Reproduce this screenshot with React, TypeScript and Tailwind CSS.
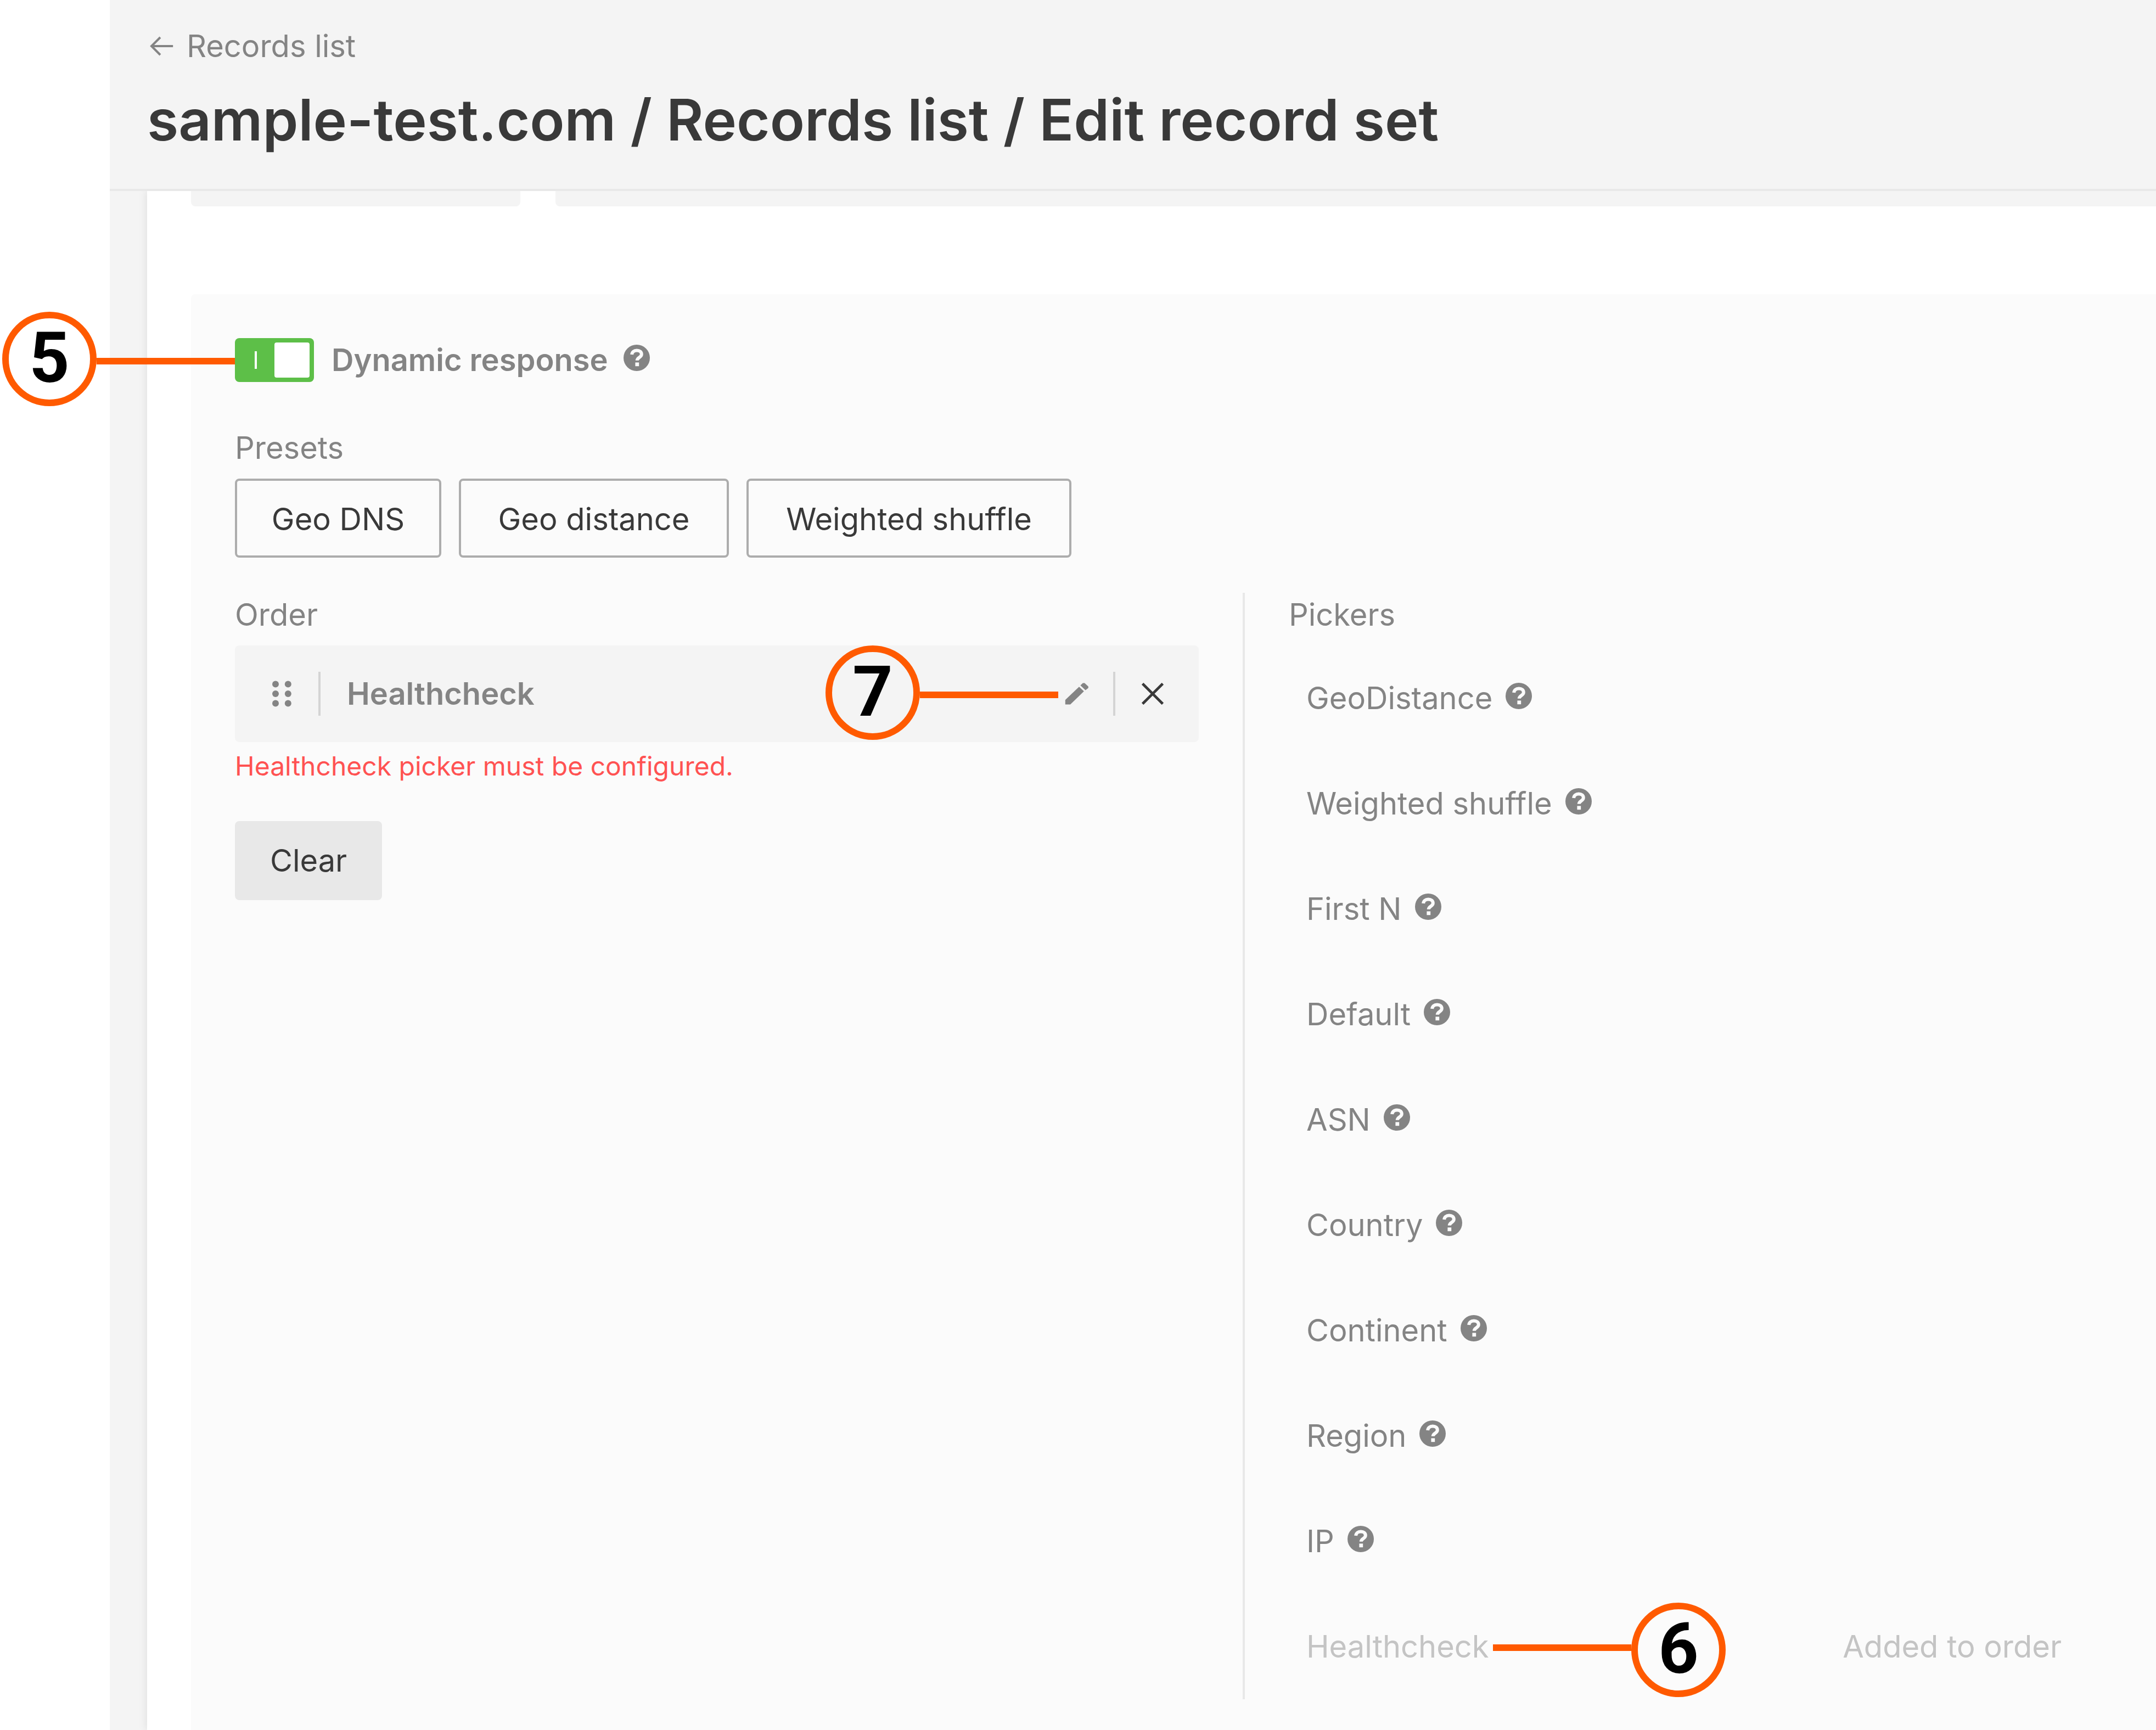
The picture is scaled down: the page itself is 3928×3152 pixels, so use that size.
import React from 'react';

const PRESETS = [
  { name: 'Geo DNS', width: 'w-[376px]' },
  { name: 'Geo distance', width: 'w-[492px]' },
  { name: 'Weighted shuffle', width: 'w-[592px]' },
];

const PICKERS = [
  'GeoDistance',
  'Weighted shuffle',
  'First N',
  'Default',
  'ASN',
  'Country',
  'Continent',
  'Region',
  'IP',
];

function HelpButton({ topic }: { topic: string }) {
  return (
    <button type="button" aria-label={'Help: ' + topic} className="mb-2 shrink-0">
      <svg viewBox="0 0 24 24" className="size-12" aria-hidden="true">
        <circle cx="12" cy="12" r="12" fill="#848484" />
        <path
          d="M7.6 9C7.8 6.6 9.5 5.3 12.1 5.3c2.6 0 4.3 1.3 4.3 3.5 0 2.9-4 2.8-4 5.6"
          fill="none"
          stroke="#fbfbfb"
          strokeWidth="3"
        />
        <rect x="10.7" y="16.2" width="3.4" height="3.4" fill="#fbfbfb" />
      </svg>
    </button>
  );
}

/* Numbered callout with a leader line; laid over the element it points at. */
function Callout({ n, className, flip = false }: { n: number; className: string; flip?: boolean }) {
  return (
    <div className={'absolute flex items-center ' + (flip ? 'flex-row-reverse ' : '') + className}>
      <div className="flex size-[172px] shrink-0 items-center justify-center rounded-full border-12 border-[#ff5a00] pb-1 font-[Roboto,sans-serif] text-[128px] leading-none font-bold text-black">
        {n}
      </div>
      <div className={'h-3 w-[252px] shrink-0 bg-[#ff5a00] ' + (flip ? 'mb-2' : 'mt-2')} />
    </div>
  );
}

export default function App() {
  return (
    <div className="min-h-screen overflow-hidden bg-white pl-[200px] font-[Inter,sans-serif] text-[56px] leading-[80px] text-[#848484]">
      <div className="flex min-h-screen flex-col bg-[#f4f4f4]">
        <header className="relative z-10 border-b-4 border-[#e8e8e8] bg-[#f4f4f4] px-[68px] pt-11 pb-[62px]">
          <a href="#records" className="flex w-fit items-center gap-6 pl-1">
            <svg viewBox="0 0 11 10" className="h-10 w-11" fill="none" stroke="#848484" aria-hidden="true">
              <path d="M1 5H10.8M5 1L1 5L5 9" />
            </svg>
            Records list
          </a>
          <h1 className="mt-[30px] text-[104px] leading-[128px] font-semibold text-[#393939]">
            sample-test.com / Records list / Edit record set
          </h1>
        </header>

        <main className="ml-[68px] flex grow flex-col bg-white pl-20 shadow-[0_0_16px_rgba(0,0,0,0.1)]">
          <div className="flex gap-16">
            <div className="h-7 w-[600px] rounded-b-lg bg-[#f4f4f4]" />
            <div className="h-7 grow rounded-bl-lg bg-[#f4f4f4]" />
          </div>

          <section className="mt-40 grow rounded-tl-lg bg-[#fbfbfb] pt-20 pl-20">
            <div className="relative flex items-center gap-7">
              <label className="flex items-center gap-8 font-semibold">
                <input type="checkbox" role="switch" defaultChecked className="sr-only" />
                <span className="flex h-20 w-36 items-center justify-between rounded-lg bg-[#5dbf48] py-2 pr-2 pl-9">
                  <span className="h-8 w-1 bg-white" />
                  <span className="size-16 rounded-sm bg-white" />
                </span>
                Dynamic response
              </label>
              <HelpButton topic="Dynamic response" />
              <Callout n={5} className="-top-12 -left-[424px]" />
            </div>

            <h2 className="mt-20">Presets</h2>
            <div className="mt-4 flex gap-8">
              {PRESETS.map((p) => (
                <button
                  key={p.name}
                  type="button"
                  className={'h-36 rounded-lg border-4 border-[#adadad] pt-1 text-[#393939] ' + p.width}
                >
                  {p.name}
                </button>
              ))}
            </div>

            <div className="mt-16 flex">
              <div className="w-[1756px] shrink-0">
                <h2>Order</h2>
                <div className="relative mt-4 flex h-44 items-center rounded-lg bg-[#f4f4f4] px-16">
                  <button type="button" aria-label="Reorder" className="px-1">
                    <svg viewBox="0 0 9 12" className="h-12 w-9" fill="#848484" aria-hidden="true">
                      <circle cx="1.5" cy="1.6" r="1.5" />
                      <circle cx="7.2" cy="1.6" r="1.5" />
                      <circle cx="1.5" cy="6" r="1.5" />
                      <circle cx="7.2" cy="6" r="1.5" />
                      <circle cx="1.5" cy="10.4" r="1.5" />
                      <circle cx="7.2" cy="10.4" r="1.5" />
                    </svg>
                  </button>
                  <span className="ml-11 h-20 w-1 bg-[#d4d4d4]" />
                  <span className="ml-12 grow font-semibold">Healthcheck</span>
                  <button type="button" aria-label="Edit Healthcheck">
                    <svg viewBox="0 0 11 10" className="h-10 w-11" fill="#848484" aria-hidden="true">
                      <path d="M0.2 9.9V7.8L6.5 1.8L8.7 3.9L2.5 9.9Z" />
                      <path d="M7.1 1.2L8.2 0.1H9L10.7 1.7V2.4L9.4 3.4Z" />
                    </svg>
                  </button>
                  <span className="ml-11 h-20 w-1 bg-[#d4d4d4]" />
                  <button type="button" aria-label="Remove Healthcheck" className="ml-12">
                    <svg viewBox="0 0 10 10" className="size-10" stroke="#393939" strokeWidth="1.2" fill="none" aria-hidden="true">
                      <path d="M0.4 0.4L9.6 9.6M9.6 0.4L0.4 9.6" />
                    </svg>
                  </button>
                  <Callout n={7} className="top-0 left-[1076px]" />
                </div>
                <p className="mt-1 text-[48px] text-[#ff5252]">Healthcheck picker must be configured.</p>
                <button type="button" className="mt-15 h-36 rounded-lg bg-[#e8e8e8] px-16 text-[#393939]">
                  Clear
                </button>
              </div>

              <div className="ml-20 grow border-l-4 border-[#e8e8e8] pl-20">
                <h2>Pickers</h2>
                <ul className="px-8 pt-4">
                  {PICKERS.map((p) => (
                    <li key={p} className="flex h-48 items-center gap-6">
                      {p}
                      <HelpButton topic={p} />
                    </li>
                  ))}
                  <li className="relative flex h-48 items-center justify-between text-[#c4c4c4]">
                    <span>Healthcheck</span>
                    <span className="mr-[140px]">Added to order</span>
                    <Callout n={6} flip className="top-4 left-[340px]" />
                  </li>
                </ul>
              </div>
            </div>
          </section>
        </main>
      </div>
    </div>
  );
}
